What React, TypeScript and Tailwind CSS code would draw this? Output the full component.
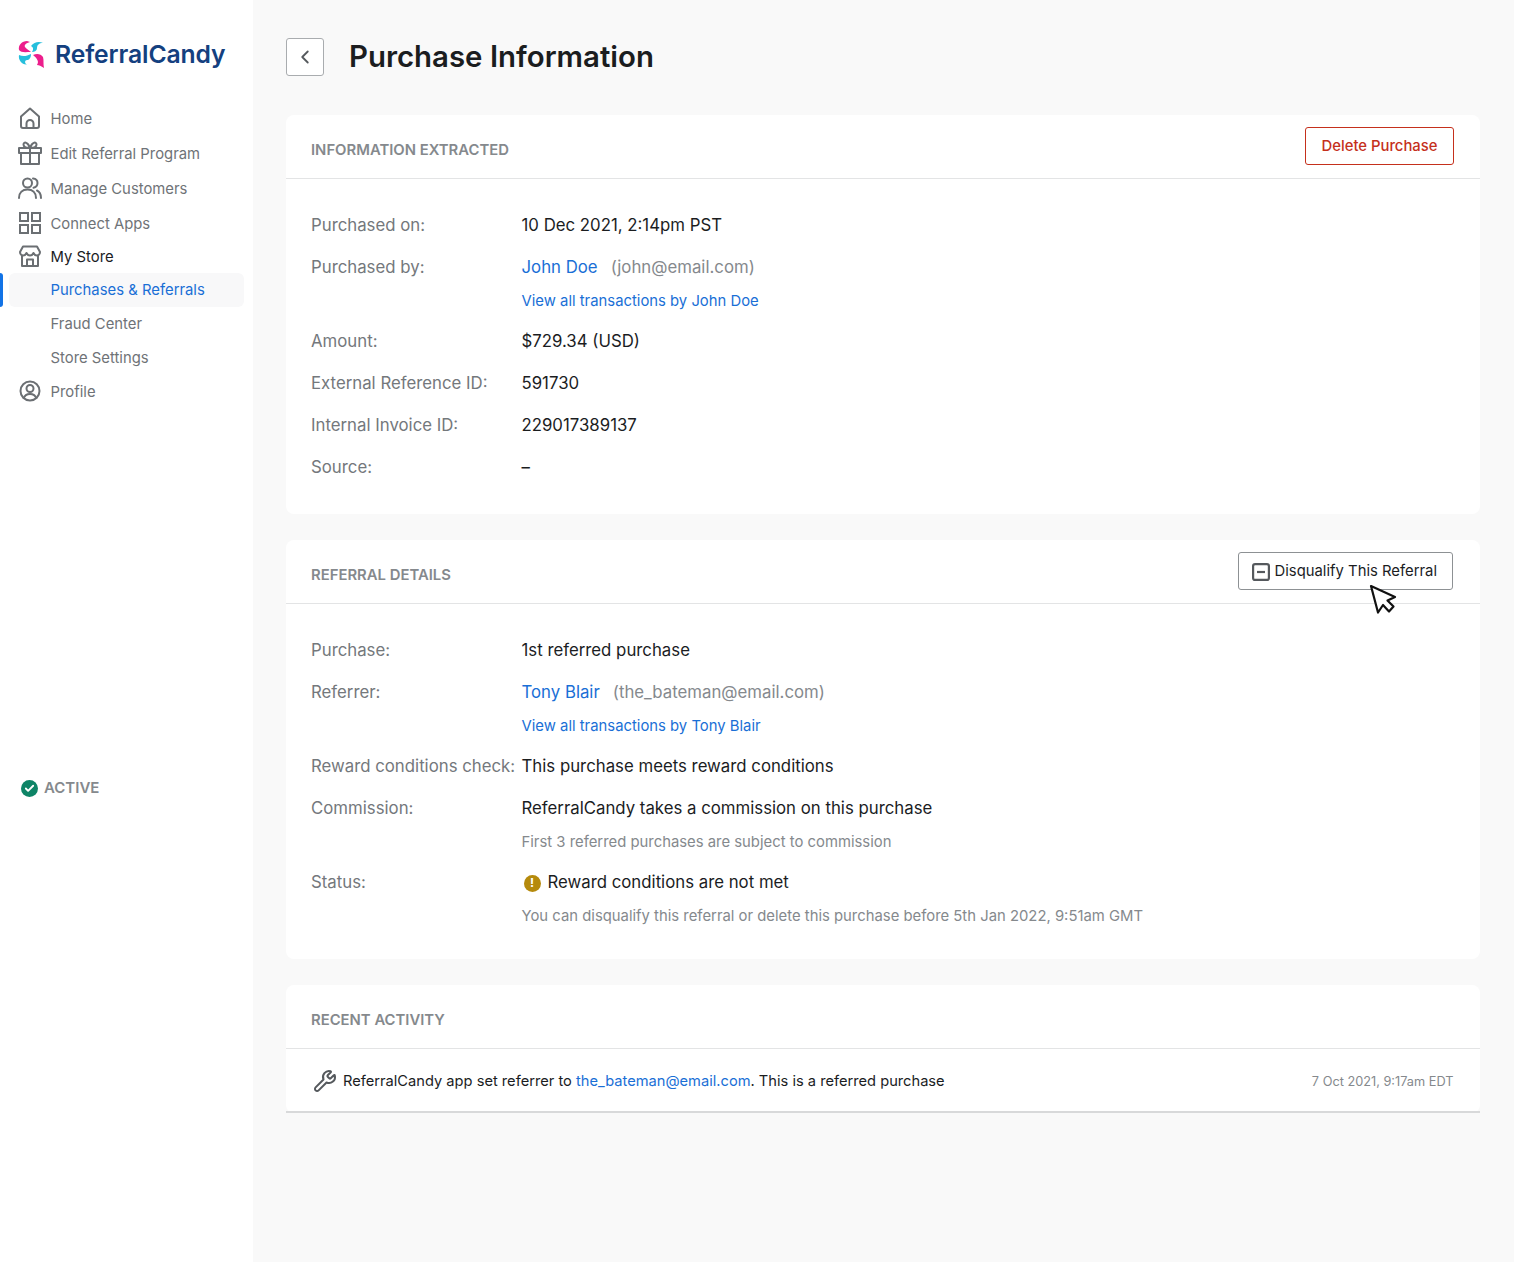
import { ReactNode } from "react";
import { ChevronLeft, Wrench, Check } from "lucide-react";

const font = { fontFamily: "Inter, 'Noto Sans', sans-serif" };

const HomeIcon = () => (
  <svg width="24" height="24" viewBox="0 0 24 24" fill="none" stroke="#6b6f73" strokeWidth="2" strokeLinejoin="round">
    <path d="M3 10.500 12 2.500l9 8V20a2 2 0 0 1-2 2H5a2 2 0 0 1-2-2z" />
    <path d="M8.500 22v-4.500a3.500 3.500 0 0 1 7 0V22" />
  </svg>
);

const GiftIcon = () => (
  <svg width="24" height="24" viewBox="0 0 24 24" fill="none" stroke="#6b6f73" strokeWidth="2" strokeLinejoin="round">
    <rect x="1" y="7" width="22" height="5" />
    <path d="M3 12v11h18V12M12 7v16" />
    <path d="M12 7C9 7 5.500 6 5.500 3.500 5.500 1 9.500 0 12 7c2.500-7 6.500-6 6.500-3.500C18.500 6 15 7 12 7z" />
  </svg>
);

const UsersIcon = () => (
  <svg width="24" height="24" viewBox="0 0 24 24" fill="none" stroke="#6b6f73" strokeWidth="2" strokeLinecap="round">
    <circle cx="9.500" cy="7" r="4.500" />
    <path d="M1 22c0-5.500 3.500-8.500 8.500-8.500S18 16.500 18 22" />
    <path d="M15 2.500c3 .3 4.500 2.300 4.500 4.500S18 11.300 15.500 11.800M19 14.500c2.500 1.300 4 4 4 7.500" />
  </svg>
);

const AppsIcon = () => (
  <svg width="24" height="24" viewBox="0 0 24 24" fill="none" stroke="#6b6f73" strokeWidth="2">
    <rect x="2" y="2" width="8" height="8" />
    <rect x="14" y="2" width="8" height="8" />
    <rect x="2" y="14" width="8" height="8" />
    <rect x="14" y="14" width="8" height="8" />
  </svg>
);

const StoreIcon = () => (
  <svg width="24" height="24" viewBox="0 0 24 24" fill="none" stroke="#6b6f73" strokeWidth="2" strokeLinejoin="round">
    <path d="M5 2.500h14l3 5.500c0 2-1.500 3.500-3.200 3.500-1.500 0-2.600-1-3.300-2.500-.7 1.500-2.200 2.500-3.500 2.500s-2.800-1-3.500-2.500c-.7 1.500-1.800 2.500-3.300 2.500C3.500 11.500 2 10 2 8z" />
    <path d="M4 11.500V22h16V11.500" />
    <path d="M9 22v-6.500h6V22" />
  </svg>
);

const ProfileIcon = () => (
  <svg width="24" height="24" viewBox="0 0 24 24" fill="none" stroke="#6b6f73" strokeWidth="2">
    <circle cx="12" cy="12" r="9.500" />
    <circle cx="12" cy="9.500" r="3.500" />
    <path d="M5.500 19.500c1-3 3.500-4.500 6.500-4.500s5.500 1.500 6.500 4.500" />
  </svg>
);

const Logo = () => (
  <svg width="27" height="27" viewBox="0 0 27 27">
    <path d="M1 9C0 4 4 0 9 0l3 1C8 2 6 4 7 6c1 2 4 3 6 5-5 0-10 1-12-2z" fill="#ec1e8c" />
    <path d="M13 5c3-4 8-5 12-3-4 0-6 2-6 5 0 3-3 4-5 4 2-3 1-5-1-6z" fill="#26bfdc" />
    <path d="M1 14c4 2 8 1 12-1 0 4-2 6-4 6s-3 3 0 4.500C4 24 0 19 1 14z" fill="#26bfdc" />
    <path d="M15 14c4-2 8-1 10 2 1 3 0 7 1 11-3-2-5-3-7-3 2-3 1-6-4-10z" fill="#ec1e8c" />
  </svg>
);

const CursorIcon = () => (
  <svg width="30" height="32" viewBox="0 0 30 32" fill="white" stroke="#111" strokeWidth="2.200" strokeLinejoin="round">
    <path d="M2 3l24 11-7.500 3.500 6 6-4.500 5-6-6.500-5 7.500z" />
  </svg>
);

const NavItem = ({ icon, label, dark, short }: { icon: ReactNode; label: string; dark?: boolean; short?: boolean }) => (
  <div className={`flex items-center pl-[18px] ${short ? "h-[31px]" : "h-[35px]"}`}>
    <span className="w-[24px] h-[24px] shrink-0 -mt-[3px]">{icon}</span>
    <span className={`ml-[8.500px] text-[14.850px] ${dark ? "text-[#1b1d1f]" : "text-[#6f7377]"}`}>{label}</span>
  </div>
);

const SubItem = ({ label, active }: { label: string; active?: boolean }) => (
  <div className="relative h-[34px] flex items-center">
    {active && <span className="absolute left-0 top-0 bottom-0 w-[3px] rounded-r bg-[#1273e6]" />}
    <div
      className={`ml-[9px] w-[235px] h-full flex items-center pl-[41.500px] rounded-md text-[14.850px] ${
        active ? "bg-[#f8f8f9] text-[#1a6fd6]" : "text-[#6f7377]"
      }`}
    >
      {label}
    </div>
  </div>
);

const Row = ({ label, children, sub }: { label: string; children: ReactNode; sub?: ReactNode }) => (
  <div>
    <div className="flex items-center h-[42px]">
      <div className="w-[210.500px] shrink-0 text-[#74787c] whitespace-nowrap">{label}</div>
      <div className="text-[#1b1d1f] flex items-center">{children}</div>
    </div>
    {sub && <div className="pl-[210.500px] h-[32px] pb-[7px] text-[14.850px] flex items-center">{sub}</div>}
  </div>
);

const Card = ({ title, action, children }: { title: string; action?: ReactNode; children: ReactNode }) => (
  <section className="bg-white rounded-lg">
    <div className="h-[64px] pl-[25px] pr-[26.500px] flex items-center justify-between border-b border-[#e3e4e5]">
      <h2 className="text-[14.850px] font-semibold text-[#85898d] mt-[7px]">{title}</h2>
      {action}
    </div>
    {children}
  </section>
);

const link = "text-[#1a6fd6]";

export default function App() {
  return (
    <div className="flex min-h-[1262px] bg-[#f9f9f9] text-[16.800px]" style={font}>
      {/* sidebar */}
      <aside className="w-[253px] shrink-0 bg-white flex flex-col">
        <div className="flex items-center h-[102px] pl-[18px] pt-[6px]">
          <Logo />
          <span className="ml-[10px] mt-[2px] text-[24.700px] font-semibold text-[#14407f] tracking-[-0.1px]">
            ReferralCandy
          </span>
        </div>
        <NavItem icon={<HomeIcon />} label="Home" />
        <NavItem icon={<GiftIcon />} label="Edit Referral Program" />
        <NavItem icon={<UsersIcon />} label="Manage Customers" />
        <NavItem icon={<AppsIcon />} label="Connect Apps" />
        <NavItem icon={<StoreIcon />} label="My Store" dark short />
        <SubItem label="Purchases & Referrals" active />
        <SubItem label="Fraud Center" />
        <SubItem label="Store Settings" />
        <NavItem icon={<ProfileIcon />} label="Profile" />
        <div className="flex items-center pl-[21px] mt-[367px]">
          <span className="w-[17px] h-[17px] rounded-full bg-[#0e8466] flex items-center justify-center">
            <Check size={11} color="white" strokeWidth={4} />
          </span>
          <span className="ml-[6px] text-[15px] font-semibold text-[#85898d]">ACTIVE</span>
        </div>
      </aside>

      {/* main */}
      <main className="flex-1 pl-[33px] pr-[34px]">
        <header className="flex items-center h-[115px]">
          <button className="w-[38px] h-[38px] -mt-[2px] flex items-center justify-center bg-white border border-[#a9acaf] rounded-[3px]">
            <ChevronLeft size={22} color="#55595d" strokeWidth={2} />
          </button>
          <h1 className="ml-[25px] -mt-[1px] text-[29.400px] font-semibold text-[#1b1d1f]">Purchase Information</h1>
        </header>

        <div className="flex flex-col gap-[26px]">
          <Card
            title="INFORMATION EXTRACTED"
            action={
              <button className="w-[149px] h-[38px] -mt-[2px] pt-[2px] pl-[1px] border border-[#c5301c] rounded-[3px] bg-white text-[14.850px] font-medium text-[#c5301c]">
                Delete Purchase
              </button>
            }
          >
            <div className="pl-[25px] pt-[26px] pb-[25px]">
              <Row label="Purchased on:">10 Dec 2021, 2:14pm PST</Row>
              <Row label="Purchased by:" sub={<span className={link}>View all transactions by John Doe</span>}>
                <span className={link}>John Doe</span>
                <span className="ml-[13px] text-[#85898d]">(john@email.com)</span>
              </Row>
              <Row label="Amount:">$729.34 (USD)</Row>
              <Row label="External Reference ID:">591730</Row>
              <Row label="Internal Invoice ID:">229017389137</Row>
              <Row label="Source:">–</Row>
            </div>
          </Card>

          <Card
            title="REFERRAL DETAILS"
            action={
              <div className="relative -mt-[2px] mr-[1px]">
                <button className="w-[215px] h-[38px] pt-[2px] flex items-center pl-[13px] border border-[#8d9194] rounded-[3px] bg-white text-[14.850px] text-[#1b1d1f]">
                  <svg width="18" height="18" viewBox="0 0 18 18" fill="none" stroke="#55595d" strokeWidth="2.200">
                    <rect x="1.100" y="1.100" width="15.800" height="15.800" rx="2" />
                    <path d="M5 9h8" />
                  </svg>
                  <span className="ml-[5px]">Disqualify This Referral</span>
                </button>
                <span className="absolute left-[131px] top-[31px]">
                  <CursorIcon />
                </span>
              </div>
            }
          >
            <div className="pl-[25px] pt-[26px] pb-[23px]">
              <Row label="Purchase:">1st referred purchase</Row>
              <Row label="Referrer:" sub={<span className={link}>View all transactions by Tony Blair</span>}>
                <span className={link}>Tony Blair</span>
                <span className="ml-[13px] text-[#85898d]">(the_bateman@email.com)</span>
              </Row>
              <Row label="Reward conditions check:">This purchase meets reward conditions</Row>
              <Row
                label="Commission:"
                sub={<span className="text-[#85898d]">First 3 referred purchases are subject to commission</span>}
              >
                ReferralCandy takes a commission on this purchase
              </Row>
              <Row
                label="Status:"
                sub={
                  <span className="text-[#85898d]">
                    You can disqualify this referral or delete this purchase before 5th Jan 2022, 9:51am GMT
                  </span>
                }
              >
                <span className="ml-[2px] w-[17px] h-[17px] rounded-full bg-[#b58a0c] flex items-center justify-center text-white text-[12px] font-bold leading-none">
                  !
                </span>
                <span className="ml-[7px]">Reward conditions are not met</span>
              </Row>
            </div>
          </Card>

          <Card title="RECENT ACTIVITY">
            <div className="h-[64px] pl-[27px] pr-[26.500px] pt-[3px] flex items-center border-b-2 border-[#d8d9da] text-[14.660px] text-[#1b1d1f]">
              <Wrench size={24} color="#55595d" className="-mt-[1px]" />
              <span className="ml-[6px]">
                ReferralCandy app set referrer to <span className={link}>the_bateman@email.com</span>. This is a referred
                purchase
              </span>
              <span className="ml-auto text-[12.750px] text-[#85898d]">7 Oct 2021, 9:17am EDT</span>
            </div>
          </Card>
        </div>
      </main>
    </div>
  );
}
